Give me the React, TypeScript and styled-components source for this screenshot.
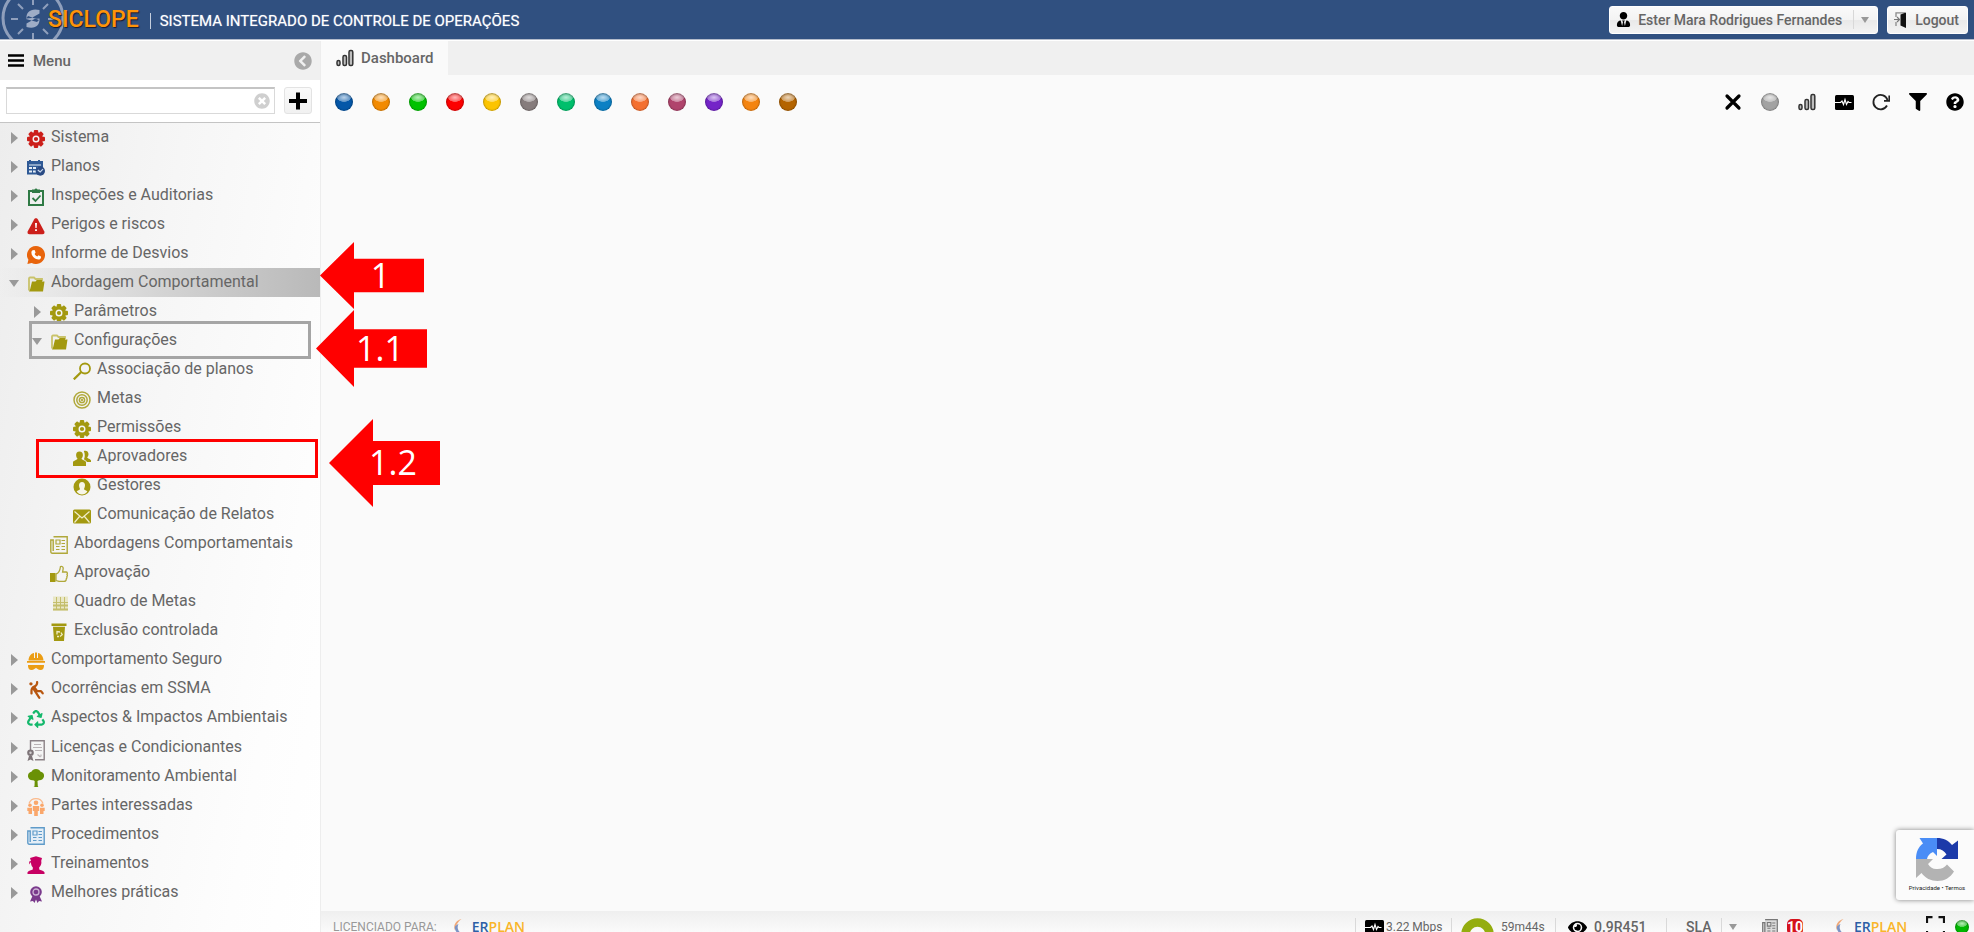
import React from "react";
import styled, { createGlobalStyle, css } from "styled-components";
import {
  FaRecycle,
  FaFilter,
  FaQuestionCircle,
  FaEye,
  FaUserTie,
  FaChevronCircleLeft,
  FaTimesCircle,
} from "react-icons/fa";
import { FaPersonFalling } from "react-icons/fa6";

const GlobalStyle = createGlobalStyle`
  * { box-sizing: border-box; }
  html, body { margin: 0; padding: 0; }
  body { font-family: Roboto, "Liberation Sans", sans-serif; color: #666; background: #fafafa; }
  button, input, select { font: inherit; color: inherit; margin: 0; padding: 0; border: 0; background: none; }
  button { cursor: pointer; }
  a { color: inherit; text-decoration: none; }
  ul { list-style: none; margin: 0; padding: 0; }
  svg { display: block; flex: none; }
`;

/* ---------- layout ---------- */

const Page = styled.div`
  position: relative;
  display: flex;
  flex-direction: column;
  height: 100vh;
  overflow: hidden;
`;

const Header = styled.header`
  display: flex;
  align-items: center;
  flex: none;
  height: 40px;
  padding-right: 6px;
  background: #305080;
  border-bottom: 1px solid #b4bccb;
  overflow: hidden;
`;

const Brand = styled.h1`
  margin: 0 11px 0 -16px;
  font-size: 23px;
  line-height: 36px;
  font-weight: 500;
  color: #ff9408;
  text-shadow: 1px 1px 1px #1b1b2a;
`;

const Tagline = styled.p`
  flex: 1;
  margin: 0;
  padding-top: 2px;
  display: flex;
  align-items: center;
  gap: 9px;
  font-size: 15px;
  color: #fff;
  text-shadow: 0 0 1px #ffffff90;
  white-space: nowrap;
  &::before {
    content: "";
    width: 1px;
    height: 16px;
    background: #c5cedd;
  }
`;

const HeaderButton = styled.button`
  display: flex;
  align-items: center;
  gap: 7px;
  height: 28px;
  margin-left: 9px;
  padding: 0 8px 0 6px;
  border: 1px solid #fff;
  border-radius: 3px;
  background: linear-gradient(#fafafa, #f3f3f3 50%, #e9e9e9 52%, #f3f3f3);
  font-size: 14px;
  font-weight: 500;
  white-space: nowrap;
  svg { color: #000; }
`;

const Divider = styled.i`
  width: 1px;
  height: 19px;
  margin-left: 4px;
  background: #d8d8d8;
`;

const Caret = styled.i`
  border: 4px solid transparent;
  border-top: 6px solid #999;
  border-bottom: 0;
`;

const Body = styled.div`
  display: flex;
  flex: 1;
  min-height: 0;
  border-top: 1px solid #fff;
`;

const Sidebar = styled.aside`
  position: relative;
  z-index: 2;
  flex: none;
  display: flex;
  flex-direction: column;
  width: 321px;
  border-right: 1px solid #ededed;
  background: #fff;
`;

const SidebarTitle = styled.div`
  display: flex;
  align-items: center;
  gap: 9px;
  height: 39px;
  padding: 0 8px;
  background: #f0f0f0;
  font-size: 15px;
  font-weight: 500;
  span { flex: 1; }
  button { color: #a9a9a9; }
  > svg { color: #000; }
`;

const SearchRow = styled.div`
  display: flex;
  align-items: center;
  gap: 9px;
  height: 43px;
  padding: 0 8px 1px 6px;
  border-bottom: 1px solid #c4c4c4;
`;

const SearchField = styled.label`
  display: flex;
  align-items: center;
  flex: 1;
  height: 27px;
  padding: 0 4px;
  border: 1px solid #d9d9d9;
  border-top: 2px solid #c4c4c4;
  background: #fff;
  input { flex: 1; min-width: 0; outline: 0; }
  button { color: #cfcfcf; }
`;

const AddButton = styled.button`
  display: grid;
  place-items: center;
  width: 28px;
  height: 27px;
  border: 1px solid #e3e3e3;
  border-radius: 3px;
  background: linear-gradient(#fafafa, #f1f1f1);
`;

const Tree = styled.nav`
  flex: 1;
  background: linear-gradient(100deg, #ededed, #f6f6f6 40%, #fdfdfd 80%, #fff);
`;

const TreeItem = styled.li`
  position: relative;
`;

const TreeLink = styled.a<{ $level: number; $active?: boolean; $tall?: boolean }>`
  display: flex;
  align-items: center;
  width: 100%;
  height: ${(p) => (p.$tall ? 30 : 29)}px;
  padding-left: ${(p) => 9 + p.$level * 23}px;
  font-size: 16px;
  line-height: 26px;
  text-align: left;
  white-space: nowrap;
  ${(p) =>
    p.$active &&
    css`
      background: linear-gradient(90deg, #f0f0f000, #d4d4d4 50%, #b9b9b9);
    `}
`;

const Label = styled.span`
  padding-bottom: 1px;
`;

const IconSlot = styled.span`
  display: grid;
  place-items: center;
  width: 18px;
  height: 18px;
  margin: 3px 6px 0 0;
`;

const Toggle = styled.i<{ $open?: boolean; $leaf?: boolean }>`
  display: grid;
  place-items: center;
  width: 10px;
  margin-right: 8px;
  padding-top: 1px;
  &::before {
    content: "";
    border: 5px solid transparent;
    ${(p) =>
      p.$leaf
        ? ""
        : p.$open
        ? "border-top: 7px solid #999; border-bottom: 0;"
        : "border-width: 6px; border-left: 7px solid #999; border-right: 0;"}
  }
`;

const Frame = styled.i<{ $color: string; $left: number; $right: number; $top: number; $bottom: number }>`
  position: absolute;
  top: ${(p) => -p.$top}px;
  bottom: ${(p) => -p.$bottom}px;
  left: ${(p) => p.$left}px;
  right: ${(p) => p.$right}px;
  border: 3px solid ${(p) => p.$color};
  pointer-events: none;
`;

const Callout = styled.strong<{ $x: number; $y: number; $w: number; $h: number; $head: number }>`
  position: absolute;
  left: ${(p) => p.$x}px;
  top: ${(p) => p.$y}px;
  width: ${(p) => p.$w}px;
  height: ${(p) => p.$h}px;
  display: flex;
  align-items: center;
  justify-content: center;
  padding: 0 0 2px 17px;
  background: #f00;
  clip-path: polygon(
    0 50%,
    ${(p) => p.$head}px 0,
    ${(p) => p.$head}px 25%,
    100% 25%,
    100% 75%,
    ${(p) => p.$head}px 75%,
    ${(p) => p.$head}px 100%
  );
  color: #fff;
  font: 400 34px/40px "Open Sans", "Noto Sans", sans-serif;
`;

const Main = styled.main`
  flex: 1;
  min-width: 0;
  display: flex;
  flex-direction: column;
`;

const TabBar = styled.div`
  display: flex;
  height: 34px;
  background: #f0f0f0;
`;

const Tab = styled.button`
  display: flex;
  align-items: center;
  gap: 7px;
  padding: 0 14px 0 15px;
  background: #fafafa;
  font-size: 15px;
  font-weight: 500;
`;

const Toolbar = styled.div`
  display: flex;
  align-items: center;
  justify-content: space-between;
  padding: 18px 8px 0 12px;
`;

const ToolGroup = styled.div`
  display: flex;
  gap: 15px;
`;

const ToolButton = styled.button`
  display: grid;
  place-items: center;
  width: 22px;
  height: 18px;
  color: #000;
`;

const Ball = styled.i<{ $c: string; $size?: number }>`
  flex: none;
  display: block;
  width: ${(p) => p.$size ?? 18}px;
  height: ${(p) => p.$size ?? 18}px;
  border-radius: 50%;
  background:
    radial-gradient(ellipse 40% 25% at 50% 25%, #ffffffb8, #ffffff60 90%, #ffffff00 100%),
    ${(p) => p.$c};
  box-shadow: inset 0 0 2px #00000080, inset 0 1px 2px #00000030;
`;

const Canvas = styled.section`
  flex: 1;
`;

const Footer = styled.footer`
  flex: none;
  height: 21px;
  overflow: hidden;
  background: linear-gradient(#efefef, #fafafa);
`;

const FooterRow = styled.div`
  display: flex;
  align-items: center;
  height: 32px;
  padding: 0 5px 0 12px;
  font-size: 12px;
  white-space: nowrap;
`;

const License = styled.span`
  margin-right: 17px;
  color: #999;
`;

const Spacer = styled.span`
  flex: 1;
`;

const FooterItem = styled.div<{ $w?: number; $gap?: number; $pad?: number; $line?: boolean; $bold?: boolean }>`
  display: flex;
  align-items: center;
  gap: ${(p) => p.$gap ?? 7}px;
  width: ${(p) => (p.$w ? `${p.$w}px` : "auto")};
  height: 19px;
  padding-left: ${(p) => p.$pad ?? 9}px;
  ${(p) => p.$line && "border-left: 1px solid #d9d9d9;"}
  ${(p) => p.$bold && "font-size: 14px; font-weight: 500;"}
`;

const ErplanMark = styled.a`
  display: flex;
  align-items: center;
  gap: 5px;
  font: 600 14px/20px "Open Sans", "Noto Sans", sans-serif;
  color: #f9b529;
  b { font-weight: 600; color: #2d5fa6; }
`;

const Badge = styled.span`
  display: grid;
  place-items: center;
  width: 16px;
  height: 16px;
  border-radius: 5px;
  background: #d5121c;
  color: #fff;
  font-size: 14px;
  line-height: 16px;
  font-weight: 700;
`;

const Recaptcha = styled.aside`
  position: absolute;
  z-index: 3;
  right: 0;
  bottom: 32px;
  display: flex;
  flex-direction: column;
  align-items: center;
  gap: 2px;
  width: 78px;
  height: 70px;
  padding: 7px 0 0 4px;
  border-radius: 3px 0 0 3px;
  background: #fbfbfb;
  box-shadow: 0 0 5px #808080;
  font-size: 6px;
  line-height: 10px;
  color: #222;
  white-space: nowrap;
`;

/* ---------- drawings ---------- */

const Svg = ({ w = 18, h = 18, box, children }: { w?: number; h?: number; box?: string; children: React.ReactNode }) => (
  <svg width={w} height={h} viewBox={box ?? `0 0 ${w} ${h}`} fill="none" aria-hidden="true">
    {children}
  </svg>
);

const HeaderLogo = () => (
  <Svg w={64} h={40}>
    <g stroke="#8f9fbc">
      <circle cx="33" cy="18" r="30" strokeWidth="3" />
      <path d="M33 0v5M33 33v6M11 19h7M48 19h7M18 4l5 5M48 4l-5 5M18 34l5-5M48 34l-5-5" strokeWidth="2" />
    </g>
    <path d="M39.500 10c-8.500-2-13.500 2-13 8.500l5-.5 8-4.500zM26.500 27c8.500 2.500 13.500-1.500 13-8.500l-5 .5-8 4.500zM28 16l11 4-2 2-11-3z" fill="#9fadc6" />
  </Svg>
);

const Gear = ({ c }: { c: string }) => (
  <Svg>
    <g fill={c}>
      <circle cx="9" cy="9" r="7" />
      {[0, 45, 90, 135].map((a) => (
        <rect key={a} x="6.8" y="0" width="4.4" height="18" rx="1" transform={`rotate(${a} 9 9)`} />
      ))}
    </g>
    <circle cx="9" cy="9" r="2.8" stroke="#f6f6f6" strokeWidth="1.4" />
  </Svg>
);

const Folder = () => (
  <Svg>
    <path d="M2 15.500V3.500a1 1 0 0 1 1-1h4L8.500 4H15v2" stroke="#c9c36b" strokeWidth="1.800" />
    <path d="M2 16.500 3.200 14 5 6.500h3.500L9.800 5H15v1.500h2.500L16 16.500z" fill="#a39910" />
  </Svg>
);

const PlanIcon = () => (
  <Svg>
    <path d="M0 2h16v8l-4 5.500H0z" fill="#2f5a96" />
    <path d="M2 1h2v3H2zM11 1h2v3h-2z" fill="#2f5a96" />
    <path d="M2 5.500h12v1H2zM2 8h3v2H2zM6 8h3v2H6zM2 11.500h3v2H2zM6 11.500h3v2H6zM10.500 8h3v1h-3z" fill="#e6edf6" />
    <circle cx="13.300" cy="12" r="4.700" fill="#2a4b84" />
    <path d="M10.800 11l2.400 2 2.800-2.800" stroke="#c9d7eb" strokeWidth="1.200" />
  </Svg>
);

const ClipboardIcon = () => (
  <Svg>
    <path d="M2 3h14v14H2z" stroke="#2f7a45" strokeWidth="2" />
    <path d="M5 1.500h2.500a1.600 1.600 0 0 1 3 0H13V5H5z" fill="#2f7a45" />
    <path d="M5.500 10l3 3 5-5.500" stroke="#2f7a45" strokeWidth="1.800" />
  </Svg>
);

const WarningIcon = () => (
  <Svg>
    <path d="M9 1.200c1 0 1.400.500 1.900 1.400l6.300 11.600c.8 1.700 0 3-1.800 3H2.600c-1.800 0-2.600-1.300-1.800-3L7.100 2.600C7.600 1.700 8 1.200 9 1.200z" fill="#cc1f1a" />
    <path d="M8 6h2l-.4 5H8.400zM8.100 12.200h1.800V14H8.100z" fill="#fff" />
  </Svg>
);

const PhoneIcon = () => (
  <Svg>
    <path d="M9 0a9 9 0 1 1-4.300 16.900L.4 18l1-4.200A9 9 0 0 1 9 0z" fill="#e8640c" />
    <path d="M5.800 4.200 7.600 4l1 2.600-1 1.300c.6 1.200 1.400 2 2.700 2.600l1.200-1.200 2.500 1.200c.2 1.800-1 3-2.600 3C7.700 13.300 4.400 10 4.400 6.400c0-1 .6-1.800 1.400-2.200z" fill="#fff" />
  </Svg>
);

const SearchIcon = () => (
  <Svg>
    <circle cx="12" cy="6.500" r="5" stroke="#a39910" strokeWidth="1.800" />
    <path d="M8.300 10 .8 17.400" stroke="#a39910" strokeWidth="2.200" />
  </Svg>
);

const TargetIcon = () => (
  <Svg>
    <g stroke="#b0a83a" strokeWidth="1.500">
      <circle cx="9" cy="9" r="8" />
      <circle cx="9" cy="9" r="5.200" />
      <circle cx="9" cy="9" r="2.600" />
    </g>
    <circle cx="9" cy="9" r="1" fill="#a39910" />
  </Svg>
);

const PeopleIcon = () => (
  <Svg>
    <path d="M6.500 2.500c2.300 0 3.500 1.500 3.400 3.700-.1 1.500-.7 2.600-1.400 3.300 0 1.400 4 2 4.500 3.500V17H0v-4c.5-1.500 4.500-2 4.500-3.500C3.700 8.800 3.200 7.700 3.100 6.200 3 4 4.200 2.500 6.500 2.500z" fill="#a39910" />
    <path d="M10.800 2c2-1 4.700 0 4.700 3 0 1.500-.6 2.600-1.300 3.300 0 1.400 3.300 1.600 3.800 3.200V13h-4c-.8-1.800-2.800-1.800-3-3 .9-1.300 1.200-5-.2-8z" fill="#a39910" />
  </Svg>
);

const ManagerIcon = () => (
  <Svg>
    <circle cx="9" cy="9" r="8.500" fill="#a39910" />
    <path d="M9 4c2 0 3 1.400 3 3.200S11 10.500 11 11.300c.5 1 2.300 1 3.400 2.200-1.400 2-3.200 3-5.400 3s-4-1-5.400-3C4.700 12.300 6.500 12.300 7 11.300 7 10.500 6 9 6 7.200S7 4 9 4z" fill="#f7f6e8" />
  </Svg>
);

const MailIcon = () => (
  <Svg>
    <rect y="2.500" width="18" height="14" rx="1.500" fill="#a39910" />
    <path d="M1.500 4.500 9 11l7.500-6.500M1.500 15.500l5-6M16.500 15.500l-5-6" stroke="#f0edc8" strokeWidth="1.200" />
  </Svg>
);

const NewsIcon = ({ c, bg = "none", w = 18 }: { c: string; bg?: string; w?: number }) => (
  <Svg w={w} box="0 0 18 18">
    <path d="M3.500.8h13.700v16.400H2.400C1.300 17.200.8 16.500.8 15.500V4h2.400v11" stroke={c} strokeWidth="1.400" fill={bg} />
    <path d="M6 4h4v4H6zM11.500 4.500H15M11.500 7.500H15M6 10.500h3.500M11.500 10.500H15M6 13.500h3.500M11.500 13.500H15" stroke={c} strokeWidth="1.200" />
  </Svg>
);

const ThumbIcon = () => (
  <Svg>
    <path d="M0 8h5.500v9H0z" fill="#a39910" />
    <path d="M6 9c2-.3 4-3.500 4.500-7.500 1.800-.6 3 .8 2.600 2.600L12.600 7H16c1.500 0 1.700 1.500 1 2.300.6.900.5 1.700-.2 2.400.3.900.1 1.600-.6 2.200.1 1.600-.7 2.500-2.200 2.500H9L6 15.500z" stroke="#b0a83a" strokeWidth="1.300" />
  </Svg>
);

const BoardIcon = () => (
  <Svg>
    <path d="M3 2.500h15v14H3z" fill="#e9e7c6" />
    <g stroke="#c4be6c">
      <path d="M3 8.500h15M6.500 3v13M10.500 3v13M14.500 3v13" />
      <path d="M3 11.500h15M3 15.500h15" strokeWidth="2" />
    </g>
  </Svg>
);

const BinIcon = () => (
  <Svg>
    <path d="M1.500.500h15v2.500h-15zM3 3.800h12L14 18H4z" fill="#a39910" />
    <path d="M7 11.500v-3l3 .5M11 9.500l1.200 2.200-2.200 1.800M7 13.500h2" stroke="#efecc4" strokeWidth="1.300" />
  </Svg>
);

const HelmetIcon = () => (
  <Svg>
    <path d="M1.500 8.500C1.600 4.500 4 1.500 7 1v5h1V.5h2V6h1V1c3 .5 5.400 3.500 5.500 7.500zM0 9h18v1.800H0zM1 13h16c.2 3-1 5-3.500 5S10 16.500 9 15.800C8 16.500 7 18 4.500 18S.8 16 1 13z" fill="#eb9d14" />
  </Svg>
);

const CertificateIcon = () => (
  <Svg w={18} h={21}>
    <path d="M3.500 10V.8h13.700v19H8" stroke="#8b8186" strokeWidth="1.400" />
    <path d="M7 4.500h7M6 7.500h9M8 10.500h7M10.500 14.500l3 2.500M14 14.500v2" stroke="#b9b2b5" strokeWidth="1.200" />
    <circle cx="3.500" cy="12.800" r="3.300" fill="#7d7478" />
    <path d="M2 16 .5 21l3-1.500L6.500 21 5 16z" fill="#7d7478" />
    <circle cx="3.500" cy="12.800" r="1.200" fill="#d4cfd1" />
  </Svg>
);

const TreeIcon = () => (
  <Svg>
    <path d="M9 0c2.300 0 3.800 1 4.300 2.500C16 3 17.500 5 17 7.500s-2.500 4-5 3.800L10.500 12l.3 5c0 .6.4.8 1 1H6.500c.5-.2 1-.4 1-1l.2-5-1.500-.8C3.500 11.600 1.300 10 1 7.500S2.200 3 4.700 2.500C5.300 1 6.700 0 9 0z" fill="#6a9106" />
  </Svg>
);

const StakeholdersIcon = () => (
  <Svg>
    <path d="M2 5.500a7.500 7.500 0 0 1 14 0" stroke="#fbb98a" strokeWidth="1.300" />
    <g fill="#faa76b">
      <circle cx="9" cy="4.800" r="2.300" />
      <circle cx="3" cy="7.300" r="1.800" />
      <circle cx="15" cy="7.300" r="1.800" />
      <path d="M5.800 8h6.400v5h-1.400v5H7.200v-5H5.800zM.3 9.700h4.700V16H1.500v-3H.3zM17.700 9.700H13V16h3.500v-3h1.200z" />
    </g>
  </Svg>
);

const TraineeIcon = () => (
  <Svg>
    <path d="M3 2 9 .2 15 2l-.8 3 .2 1c.2 2.800-1.200 4.200-2.200 5.300v2.300c1.300.8 4.500 1 5.300 2.600V18H.5v-1.800c.8-1.600 4-1.800 5.300-2.600v-2.300C4.800 10.200 3.800 8.800 4 6L2.200 8.500V5.500L4 5z" fill="#c70063" />
  </Svg>
);

const RosetteIcon = () => (
  <Svg>
    <circle cx="9" cy="7" r="5.800" fill="#7a3a8c" />
    <path d="M5.500 11 3 16.500l3-.5 1.500 2L9 14.500l1.500 3.500 1.500-2 3 .5L12.500 11z" fill="#7a3a8c" />
    <circle cx="9" cy="7" r="3" stroke="#cdb4d6" strokeWidth="1.300" />
  </Svg>
);

const ChartIcon = () => (
  <Svg>
    <g fill="#bdbdbd" stroke="#333" strokeWidth="1.500">
      <rect x="1" y="11.500" width="3" height="5" rx="1.500" />
      <rect x="7" y="6.500" width="3.500" height="10" rx="1.500" />
      <rect x="13" y="1.500" width="3.800" height="15" rx="1.500" />
    </g>
  </Svg>
);

const MonitorIcon = () => (
  <Svg w={19} h={15}>
    <rect width="19" height="15" rx="1.500" fill="#000" />
    <path d="M0 7.500h5.500L7 6l1.500 3.500L10 4.500l1.500 5L13 6.500l1 1h2.500" stroke="#fff" strokeWidth="1.200" />
  </Svg>
);

const RefreshIcon = () => (
  <Svg>
    <path d="M15 12.500A7.200 7.200 0 1 1 15.500 7" stroke="#222" strokeWidth="1.800" />
    <path d="M17.300 2.500v5.300h-5.300" stroke="#222" strokeWidth="1.800" />
  </Svg>
);

const CrossIcon = () => (
  <Svg>
    <path d="M3 3l12 12M15 3 3 15" stroke="#000" strokeWidth="3.200" strokeLinecap="round" />
  </Svg>
);

const PlusIcon = () => (
  <Svg>
    <path d="M9 .5v17M0 9h18" stroke="#000" strokeWidth="4" />
  </Svg>
);

const BurgerIcon = () => (
  <Svg w={16} h={13}>
    <path d="M0 1.500h16M0 6.500h16M0 11.500h16" stroke="#000" strokeWidth="2.400" />
  </Svg>
);

const DoorIcon = () => (
  <Svg w={14} h={16}>
    <path d="M2 5V.8h9M2 10v4" stroke="#8a8a8a" strokeWidth="1.300" />
    <path d="M6.500 2.500 12 .5V16l-5.500-2.500z" fill="#111" />
    <path d="M0 7.500h5M3 5l2.500 2.500L3 10" stroke="#777" strokeWidth="1.200" />
  </Svg>
);

const Donut = () => (
  <Svg w={33} h={47}>
    <circle cx="16.500" cy="30.500" r="12" stroke="#94ad0f" strokeWidth="8.500" />
  </Svg>
);

const Swoosh = () => (
  <Svg w={13} h={20}>
    <path d="M7.500 2C2 3.500-1 8 .8 13 1.800 11 2 6 7.500 2z" fill="#f0a878" />
    <path d="M.8 10c0 5.500 5.200 9.500 11.200 7-4.500.3-7.500-2-8.200-5.500-.3-1.700 0-3.200.7-4.500C3 7.500 1.500 8.500.8 10z" fill="#7c93c4" />
  </Svg>
);

const ExpandIcon = () => (
  <Svg w={19} h={22}>
    <path d="M1 7V1.200h5.500M12.500 1.200H18V7M1 15v5.800h5.500M12.500 20.800H18V15" stroke="#111" strokeWidth="2.200" />
  </Svg>
);

const RecaptchaLogo = () => (
  <Svg w={44} h={44}>
    <path d="M22 1v18l-4-4c-3.500 1.500-5.500 4-6 7H1C1 15 3.500 9.500 8 6.500L4.500 1z" fill="#4a8df6" />
    <path d="M22 1c6.500 0 11.500 2.500 15 7l6-4.500V22H26.500l5-4.500c-2-3.500-5-5.500-9.500-5.500z" fill="#1c3aa9" />
    <path d="M1 22h17l-5 5c2.500 4 5.500 5.500 9.500 5 4 0 7-1.500 9.500-4.500l7 7C35 41 29.500 44 22.500 44 16 44 10 41 6.500 36L1 41z" fill="#b3b3b3" />
  </Svg>
);

const Erplan = () => (
  <ErplanMark href="#erplan">
    <Swoosh />
    <span>
      <b>ER</b>PLAN
    </span>
  </ErplanMark>
);

/* ---------- data ---------- */

const olive = "#a39910";

type Node = {
  label: string;
  icon: React.ReactNode;
  level?: number;
  state?: "open" | "closed" | "leaf";
  active?: boolean;
  tall?: boolean;
  mark?: React.ReactNode;
};

const nodes: Node[] = [
  { label: "Sistema", icon: <Gear c="#cc1f1a" /> },
  { label: "Planos", icon: <PlanIcon /> },
  { label: "Inspeções e Auditorias", icon: <ClipboardIcon /> },
  { label: "Perigos e riscos", icon: <WarningIcon /> },
  { label: "Informe de Desvios", icon: <PhoneIcon /> },
  {
    label: "Abordagem Comportamental",
    icon: <Folder />,
    state: "open",
    active: true,
    mark: <Callout $x={320} $y={-26} $w={104} $h={67} $head={34}>1</Callout>,
  },
  { label: "Parâmetros", icon: <Gear c={olive} />, level: 1 },
  {
    label: "Configurações",
    icon: <Folder />,
    level: 1,
    state: "open",
    mark: (
      <>
        <Frame $color="#a5a5a5" $left={29} $right={9} $top={5} $bottom={4} />
        <Callout $x={316} $y={-16} $w={111} $h={77} $head={38}>1.1</Callout>
      </>
    ),
  },
  { label: "Associação de planos", icon: <SearchIcon />, level: 2, state: "leaf" },
  { label: "Metas", icon: <TargetIcon />, level: 2, state: "leaf" },
  { label: "Permissões", icon: <Gear c={olive} />, level: 2, state: "leaf" },
  {
    label: "Aprovadores",
    icon: <PeopleIcon />,
    level: 2,
    state: "leaf",
    mark: (
      <>
        <Frame $color="#f00" $left={36} $right={2} $top={3} $bottom={7} />
        <Callout $x={329} $y={-23} $w={111} $h={88} $head={44}>1.2</Callout>
      </>
    ),
  },
  { label: "Gestores", icon: <ManagerIcon />, level: 2, state: "leaf" },
  { label: "Comunicação de Relatos", icon: <MailIcon />, level: 2, state: "leaf" },
  { label: "Abordagens Comportamentais", icon: <NewsIcon c="#b0a83a" />, level: 1, state: "leaf" },
  { label: "Aprovação", icon: <ThumbIcon />, level: 1, state: "leaf" },
  { label: "Quadro de Metas", icon: <BoardIcon />, level: 1, state: "leaf" },
  { label: "Exclusão controlada", icon: <BinIcon />, level: 1, state: "leaf" },
  { label: "Comportamento Seguro", icon: <HelmetIcon /> },
  { label: "Ocorrências em SSMA", icon: <FaPersonFalling size={18} color="#b8560f" /> },
  { label: "Aspectos & Impactos Ambientais", icon: <FaRecycle size={18} color="#14b86c" /> },
  { label: "Licenças e Condicionantes", icon: <CertificateIcon />, tall: true },
  { label: "Monitoramento Ambiental", icon: <TreeIcon /> },
  { label: "Partes interessadas", icon: <StakeholdersIcon /> },
  { label: "Procedimentos", icon: <NewsIcon c="#5f9bc9" bg="#e4eef7" /> },
  { label: "Treinamentos", icon: <TraineeIcon /> },
  { label: "Melhores práticas", icon: <RosetteIcon /> },
];

const balls = [
  "#0557a8", "#f28a00", "#00c200", "#fc0000", "#fcc400", "#867c7c", "#00bf6c",
  "#0c80c4", "#f47030", "#b0446c", "#7424c8", "#f48410", "#b46400",
];

export default function App() {
  return (
    <Page>
      <GlobalStyle />
      <Header>
        <HeaderLogo />
        <Brand>SICLOPE</Brand>
        <Tagline>SISTEMA INTEGRADO DE CONTROLE DE OPERAÇÕES</Tagline>
        <HeaderButton>
          <FaUserTie size={15} />
          Ester Mara Rodrigues Fernandes
          <Divider />
          <Caret />
        </HeaderButton>
        <HeaderButton>
          <DoorIcon />
          Logout
        </HeaderButton>
      </Header>
      <Body>
        <Sidebar>
          <SidebarTitle>
            <BurgerIcon />
            <span>Menu</span>
            <button aria-label="Recolher menu">
              <FaChevronCircleLeft size={18} />
            </button>
          </SidebarTitle>
          <SearchRow>
            <SearchField>
              <input type="text" aria-label="Pesquisar no menu" />
              <button aria-label="Limpar">
                <FaTimesCircle size={16} />
              </button>
            </SearchField>
            <AddButton aria-label="Adicionar">
              <PlusIcon />
            </AddButton>
          </SearchRow>
          <Tree aria-label="Menu">
            <ul>
              {nodes.map((n) => (
                <TreeItem key={n.label}>
                  <TreeLink href="#menu" $level={n.level ?? 0} $active={n.active} $tall={n.tall}>
                    <Toggle $open={n.state === "open"} $leaf={n.state === "leaf"} />
                    <IconSlot>{n.icon}</IconSlot>
                    <Label>{n.label}</Label>
                  </TreeLink>
                  {n.mark}
                </TreeItem>
              ))}
            </ul>
          </Tree>
        </Sidebar>
        <Main>
          <TabBar>
            <Tab>
              <ChartIcon />
              Dashboard
            </Tab>
          </TabBar>
          <Toolbar>
            <ToolGroup>
              {balls.map((c) => (
                <ToolButton key={c} aria-label="Módulo">
                  <Ball $c={c} />
                </ToolButton>
              ))}
            </ToolGroup>
            <ToolGroup>
              <ToolButton aria-label="Fechar"><CrossIcon /></ToolButton>
              <ToolButton aria-label="Status"><Ball $c="#a2a2a2" /></ToolButton>
              <ToolButton aria-label="Gráficos"><ChartIcon /></ToolButton>
              <ToolButton aria-label="Monitor"><MonitorIcon /></ToolButton>
              <ToolButton aria-label="Atualizar"><RefreshIcon /></ToolButton>
              <ToolButton aria-label="Filtrar"><FaFilter size={18} /></ToolButton>
              <ToolButton aria-label="Ajuda"><FaQuestionCircle size={18} /></ToolButton>
            </ToolGroup>
          </Toolbar>
          <Canvas />
          <Footer>
            <FooterRow>
              <License>LICENCIADO PARA:</License>
              <Erplan />
              <Spacer />
              <FooterItem $line $w={96} $gap={2}>
                <MonitorIcon />
                3.22 Mbps
              </FooterItem>
              <FooterItem $line $w={104}>
                <Donut />
                59m44s
              </FooterItem>
              <FooterItem $line $bold $w={111} $pad={12}>
                <FaEye size={19} color="#000" />
                0.9R451
              </FooterItem>
              <FooterItem $line $bold $w={55} $pad={19}>
                SLA
              </FooterItem>
              <FooterItem $line $w={41} $pad={7}>
                <Caret />
              </FooterItem>
              <FooterItem $w={74} $pad={0} $gap={9}>
                <NewsIcon c="#777" bg="#ddd" w={16} />
                <Badge>10</Badge>
              </FooterItem>
              <FooterItem $w={90} $pad={0}>
                <Erplan />
              </FooterItem>
              <FooterItem $pad={0} $gap={10}>
                <ExpandIcon />
                <Ball $c="#00b800" $size={14} />
              </FooterItem>
            </FooterRow>
          </Footer>
        </Main>
      </Body>
      <Recaptcha>
        <RecaptchaLogo />
        <span>Privacidade • Termos</span>
      </Recaptcha>
    </Page>
  );
}
